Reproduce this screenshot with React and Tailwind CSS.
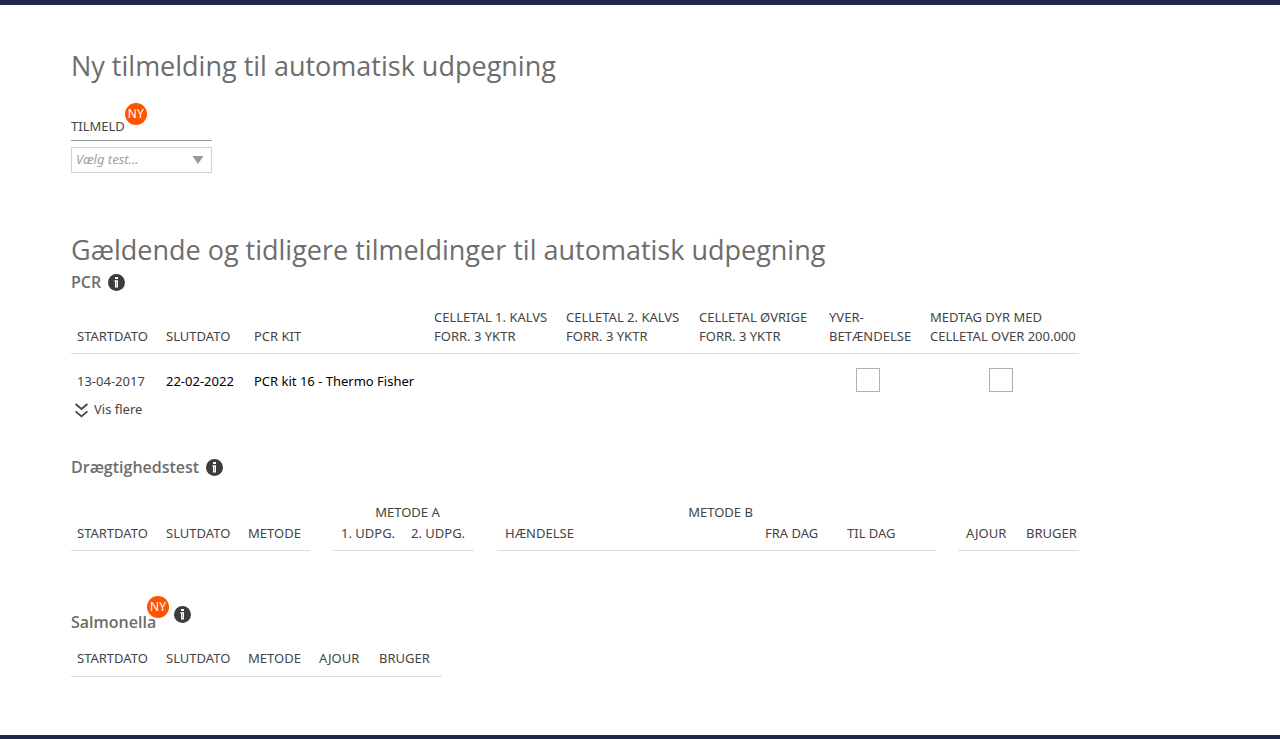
import React, { useState } from 'react';

const InfoIcon = () => (
  <svg viewBox="0 0 17 17" className="w-[17px] h-[17px] shrink-0" aria-hidden="true">
    <circle cx="8.5" cy="8.5" r="8.5" fill="#3c3c3c" />
    <path d="M7 3h3v2H7z" fill="#fff" />
    <path d="M6.4 6.2H10v7.2H7V7.4h-.6z" fill="#fff" />
    <path d="M8.1 7.6h.8v4.8h-.8z" fill="#999" />
  </svg>
);

const NewBadge = () => (
  <span className="flex items-center justify-center w-[22px] h-[22px] shrink-0 rounded-full bg-[#ff5400] text-white text-xs font-normal leading-none">
    NY
  </span>
);

const InfoButton = ({ label }) => (
  <button type="button" aria-label={label} className="cursor-pointer">
    <InfoIcon />
  </button>
);

const Th = ({ children, className = 'pl-[6px]', ...rest }) => (
  <th className={`font-normal text-left align-bottom whitespace-nowrap ${className}`} {...rest}>
    {children}
  </th>
);

const Checkbox = ({ label, checked, onChange }) => (
  <input
    type="checkbox"
    aria-label={label}
    checked={checked}
    onChange={onChange}
    className="block appearance-none w-6 h-6 border border-[#b0b0b0] bg-white checked:bg-gray-400"
  />
);

const App = () => {
  const [test, setTest] = useState('');
  const [mastitis, setMastitis] = useState(false);
  const [highCount, setHighCount] = useState(false);

  return (
    <div className="min-h-screen bg-white border-t-5 border-b-4 border-[#1e2848] font-['Noto_Sans','Open_Sans',sans-serif] text-[13px] text-[#444]">
      <main className="px-[71px] pt-[43px] pb-14">
        {/* Sign up */}
        <h1 className="font-['Open_Sans',sans-serif] text-[27px] leading-9 text-[#6d6d6d]">Ny tilmelding til automatisk udpegning</h1>

        <div className="w-[141px] mt-[19px]">
          <div className="flex items-start h-[38px] border-b border-[#999]">
            <label htmlFor="test" className="pt-[13px] leading-5">TILMELD</label>
            <NewBadge />
          </div>
          <div className="relative mt-[6px]">
            <select
              id="test"
              value={test}
              onChange={(e) => setTest(e.target.value)}
              className="block appearance-none w-full h-[26px] pl-1 border border-[#d4d4d4] bg-white italic text-[#a0a0a0]"
            >
              <option value="">Vælg test...</option>
              <option value="pcr">PCR</option>
              <option value="salmonella">Salmonella</option>
            </select>
            <svg viewBox="0 0 12 8" className="absolute right-2 top-[9px] w-3 h-2 pointer-events-none" aria-hidden="true">
              <path d="M0.5 0h11L6 8z" fill="#999" />
            </svg>
          </div>
        </div>

        {/* Current and previous */}
        <h2 className="mt-[59px] font-['Open_Sans',sans-serif] text-[27px] leading-9 text-[#6d6d6d]">
          Gældende og tidligere tilmeldinger til automatisk udpegning
        </h2>

        <section>
          <div className="flex items-center gap-[7px] h-7">
            <h3 className="text-base leading-5 font-['Open_Sans',sans-serif] font-semibold text-[#6d6d6d]">PCR</h3>
            <InfoButton label="Info om PCR" />
          </div>
          <table className="table-fixed w-full max-w-[1008px] mt-3 leading-[19px]">
            <colgroup>
              <col className="w-[89px]" />
              <col className="w-[88px]" />
              <col className="w-[180px]" />
              <col className="w-[132px]" />
              <col className="w-[133px]" />
              <col className="w-[130px]" />
              <col className="w-[101px]" />
              <col className="w-[155px]" />
            </colgroup>
            <thead>
              <tr className="border-b border-[#dcdcdc]">
                <Th className="pl-[6px] pb-[7px]">STARTDATO</Th>
                <Th className="pl-[6px] pb-[7px]">SLUTDATO</Th>
                <Th className="pl-[6px] pb-[7px]">PCR KIT</Th>
                <Th className="pl-[6px] pb-[7px]">CELLETAL 1. KALVS<br />FORR. 3 YKTR</Th>
                <Th className="pl-[6px] pb-[7px]">CELLETAL 2. KALVS<br />FORR. 3 YKTR</Th>
                <Th className="pl-[6px] pb-[7px]">CELLETAL ØVRIGE<br />FORR. 3 YKTR</Th>
                <Th className="pl-[6px] pb-[7px]">YVER-<br />BETÆNDELSE</Th>
                <Th className="pl-[6px] pb-[7px]">MEDTAG DYR MED<br />CELLETAL OVER 200.000</Th>
              </tr>
            </thead>
            <tbody>
              <tr className="whitespace-nowrap text-black">
                <td className="pl-[6px] pt-4 text-[#444]">13-04-2017</td>
                <td className="pl-[6px] pt-4">22-02-2022</td>
                <td className="pl-[6px] pt-4">PCR kit 16 - Thermo Fisher</td>
                <td />
                <td />
                <td />
                <td className="pl-[33px] pt-[14px]">
                  <Checkbox label="Yverbetændelse" checked={mastitis} onChange={() => setMastitis(!mastitis)} />
                </td>
                <td className="pl-[65px] pt-[14px]">
                  <Checkbox label="Medtag dyr" checked={highCount} onChange={() => setHighCount(!highCount)} />
                </td>
              </tr>
            </tbody>
          </table>
          <button type="button" className="flex items-center gap-[6px] mt-2 pl-1 h-5 cursor-pointer">
            <svg viewBox="0 0 13 15" className="w-[13px] h-[15px]" fill="none" stroke="#444" strokeWidth="1.8" aria-hidden="true">
              <path d="M0.6 1l5.9 5 5.9-5M0.6 8.4l5.9 5 5.9-5" />
            </svg>
            Vis flere
          </button>
        </section>

        <section className="mt-[33px]">
          <div className="flex items-center gap-[7px] h-7">
            <h3 className="text-base leading-5 font-['Open_Sans',sans-serif] font-semibold text-[#6d6d6d]">Drægtighedstest</h3>
            <InfoButton label="Info om drægtighedstest" />
          </div>
          <table className="table-fixed w-full max-w-[1008px] mt-[21px] leading-[21px]">
            <colgroup>
              <col className="w-[89px]" />
              <col className="w-[82px]" />
              <col className="w-[68px]" />
              <col className="w-[23px]" />
              <col className="w-[70px]" />
              <col className="w-[71px]" />
              <col className="w-[23px]" />
              <col className="w-[260px]" />
              <col className="w-[82px]" />
              <col className="w-[97px]" />
              <col className="w-[22px]" />
              <col className="w-[60px]" />
              <col className="w-[61px]" />
            </colgroup>
            <thead>
              <tr>
                <td colSpan={4} />
                <th colSpan={2} className="pl-2 font-normal text-center">METODE A</th>
                <td />
                <th colSpan={3} className="pl-2 font-normal text-center">METODE B</th>
                <td colSpan={3} />
              </tr>
              <tr>
                <Th className="pl-[6px] pb-[6px] border-b border-[#dcdcdc]">STARTDATO</Th>
                <Th className="pl-[6px] pb-[6px] border-b border-[#dcdcdc]">SLUTDATO</Th>
                <Th className="pl-[6px] pb-[6px] border-b border-[#dcdcdc]">METODE</Th>
                <td />
                <Th className="pl-2 pb-[6px] border-b border-[#dcdcdc]">1. UDPG.</Th>
                <Th className="pl-2 pb-[6px] border-b border-[#dcdcdc]">2. UDPG.</Th>
                <td />
                <Th className="pl-2 pb-[6px] border-b border-[#dcdcdc]">HÆNDELSE</Th>
                <Th className="pl-2 pb-[6px] border-b border-[#dcdcdc]">FRA DAG</Th>
                <Th className="pl-2 pb-[6px] border-b border-[#dcdcdc]">TIL DAG</Th>
                <td />
                <Th className="pl-2 pb-[6px] border-b border-[#dcdcdc]">AJOUR</Th>
                <Th className="pl-2 pb-[6px] border-b border-[#dcdcdc]">BRUGER</Th>
              </tr>
            </thead>
          </table>
        </section>

        <section className="mt-[45px]">
          <div className="flex items-start h-9">
            <div className="relative w-[98px]">
              <h3 className="pt-4 text-base leading-5 font-['Open_Sans',sans-serif] font-semibold text-[#6d6d6d]">Salmonella</h3>
              <div className="absolute right-0 top-0"><NewBadge /></div>
            </div>
            <div className="pl-[5px] pt-[10px]">
              <InfoButton label="Info om salmonella" />
            </div>
          </div>
          <table className="table-fixed w-full max-w-[371px] mt-4 leading-[21px]">
            <colgroup>
              <col className="w-[89px]" />
              <col className="w-[82px]" />
              <col className="w-[71px]" />
              <col className="w-[60px]" />
              <col className="w-[69px]" />
            </colgroup>
            <thead>
              <tr className="border-b border-[#dcdcdc]">
                <Th className="pl-[6px] pb-[7px]">STARTDATO</Th>
                <Th className="pl-[6px] pb-[7px]">SLUTDATO</Th>
                <Th className="pl-[6px] pb-[7px]">METODE</Th>
                <Th className="pl-[6px] pb-[7px]">AJOUR</Th>
                <Th className="pl-[6px] pb-[7px]">BRUGER</Th>
              </tr>
            </thead>
          </table>
        </section>
      </main>
    </div>
  );
};

export default App;
